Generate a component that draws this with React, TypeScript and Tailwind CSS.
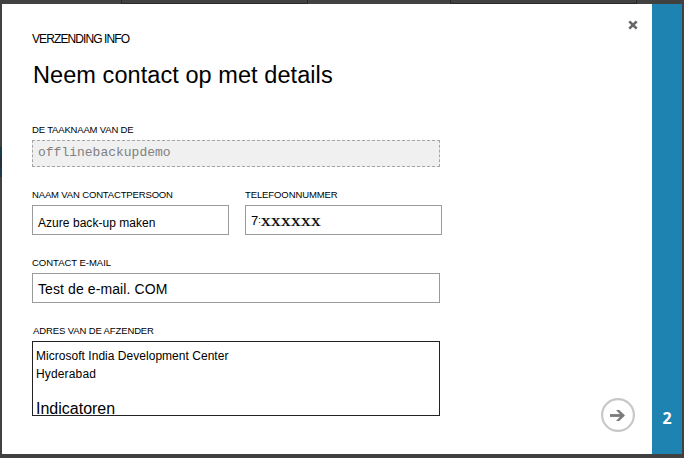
import type { ReactNode } from "react";

function Label({ children, className }: { children: ReactNode; className: string }) {
  return <div className={`h-3 whitespace-nowrap text-[9.5px] leading-3 ${className}`}>{children}</div>;
}

function Field({ children, className }: { children: ReactNode; className: string }) {
  return (
    <div className={`h-[30px] whitespace-nowrap border border-[#9b9b9b] bg-white pl-[5px] ${className}`}>
      {children}
    </div>
  );
}

function CloseIcon() {
  return (
    <svg width="10" height="10" viewBox="0 0 10 10" className="block">
      <path d="M1.3 1.3 8.7 8.7M8.7 1.3 1.3 8.7" stroke="#666" strokeWidth="2.6" />
    </svg>
  );
}

function NextIcon() {
  return (
    <svg width="34" height="34" viewBox="0 0 34 34" fill="none" className="block">
      <circle cx="17" cy="17" r="15.9" stroke="#c8c8c8" strokeWidth="2.2" />
      <path d="M9 17.5H22" stroke="#7b7b7b" strokeWidth="2.8" />
      <path d="M15 12H18.2L24 17.5 18.2 23H15L20.2 17.5Z" fill="#7b7b7b" />
    </svg>
  );
}

export default function App() {
  return (
    <div className="flex h-[458px] w-[684px] flex-col overflow-hidden bg-[#424142] font-['Liberation_Sans',Arial,sans-serif] text-black">
      <div className="flex h-1 shrink-0 pl-[121px]">
        <div className="mr-[142px] w-[187px] border-x border-b border-[#292929]" />
        <div className="w-[187px] border-x border-b border-[#292929]" />
      </div>
      <div className="flex h-[450px] shrink-0">
        <div className="w-0.5 shrink-0 pt-[143px]">
          <div className="h-[10px] bg-[#1c3b4a]" />
          <div className="h-[10px] bg-[#24313a]" />
          <div className="h-[10px] bg-[#1c3b4a]" />
        </div>
        <main className="relative w-[650px] shrink-0 bg-white pl-[30px] pt-[28px]">
          <div className="h-[14px] whitespace-nowrap text-[12px] leading-[14px] tracking-[-0.9px]">
            VERZENDING INFO
          </div>
          <h1 className="mt-[15px] h-7 whitespace-nowrap pl-px text-[23.5px] leading-7 tracking-[0.07px]">
            Neem contact op met details
          </h1>
          <div className="mt-[35px]">
            <Label className="tracking-[-0.17px]">DE TAAKNAAM VAN DE</Label>
            <div className="mt-1 h-[27px] w-[408px] border border-dashed border-[#a5a5a5] bg-[#f0f0f0] pl-[5px] font-['Liberation_Mono','Courier_New',monospace] text-[13px] leading-6 text-[#808080]">
              offlinebackupdemo
            </div>
          </div>
          <div className="mt-[22px] flex gap-4">
            <div>
              <Label className="tracking-[-0.15px]">NAAM VAN CONTACTPERSOON</Label>
              <Field className="mt-1 w-[197px] text-[12px] leading-[34px] tracking-[0.04px]">Azure back-up maken</Field>
            </div>
            <div>
              <Label className="tracking-[-0.1px]">TELEFOONNUMMER</Label>
              <Field className="mt-1 flex w-[197px] leading-[29px]">
                <span className="text-[13px]">7</span>
                <span className="w-[3px] text-[9px]">:</span>
                <span className="origin-left scale-x-[1.2] font-['Liberation_Serif',serif] text-[16px] tracking-[0.35px] [-webkit-text-stroke:0.2px_black]">
                  xxxxxx
                </span>
              </Field>
            </div>
          </div>
          <div className="mt-[22px]">
            <Label className="tracking-[-0.02px]">CONTACT E-MAIL</Label>
            <Field className="mt-1 w-[408px] text-[14px] leading-[31px] tracking-[0.1px]">Test de e-mail. COM</Field>
          </div>
          <div className="mt-[22px]">
            <Label className="pl-px tracking-[-0.12px]">ADRES VAN DE AFZENDER</Label>
            <div className="mt-1 h-[75px] w-[408px] overflow-hidden border border-[#222] pl-[3px] pt-[5px] text-[12px] leading-[18px]">
              <div className="tracking-[0.03px]">Microsoft India Development Center</div>
              <div className="tracking-[0.15px]">Hyderabad</div>
              <div className="mt-[17px] text-[16px]">Indicatoren</div>
            </div>
          </div>
          <button aria-label="Sluiten" className="absolute left-[626px] top-4">
            <CloseIcon />
          </button>
          <button aria-label="Volgende" className="absolute left-[599px] top-[394px]">
            <NextIcon />
          </button>
        </main>
        <aside className="flex w-[30px] shrink-0 items-end justify-center bg-[#1f83b1] pb-[24px] font-['Open_Sans',sans-serif] text-[16px] font-bold leading-6 text-white">
          2
        </aside>
      </div>
    </div>
  );
}
